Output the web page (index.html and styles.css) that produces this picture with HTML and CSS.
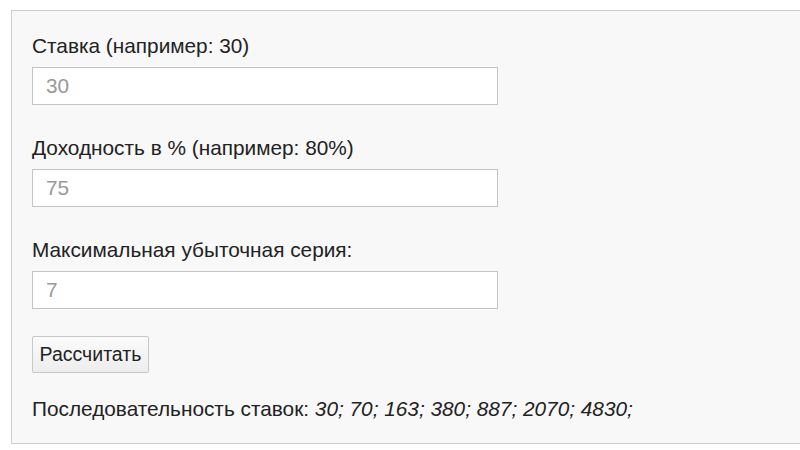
FILE: index.html
```html
<!DOCTYPE html>
<html lang="ru">
<head>
    <meta charset="UTF-8">
    <meta name="viewport" content="width=device-width, initial-scale=1.0">
    <title>Калькулятор ставок</title>
    <link rel="stylesheet" href="styles.css">
</head>
<body>

    <div class="calc">
        <div class="field">
            <label for="bet">Ставка (например: 30)</label>
            <input type="text" id="bet" placeholder="30">
        </div>

        <div class="field">
            <label for="profit">Доходность в % (например: 80%)</label>
            <input type="text" id="profit" placeholder="75">
        </div>

        <div class="field">
            <label for="series">Максимальная убыточная серия:</label>
            <input type="text" id="series" placeholder="7">
        </div>

        <button class="calc-button">Рассчитать</button>

        <p class="result">Последовательность ставок: <em>30; 70; 163; 380; 887; 2070; 4830;</em></p>
    </div>

</body>
</html>
```

FILE: styles.css
```css
body {
    font-family: "Liberation Sans", Arial, sans-serif;
    margin: 0;
    padding: 10px 0 0 11px;
    background-color: #fff;
    color: #222;
}
.calc {
    height: 409px;
    padding: 23px 20px 0 20px;
    background-color: #f8f8f8;
    border: 1px solid #cfcfcf;
    border-right: none;
}
.field {
    margin-bottom: 31px;
}
.field label {
    display: block;
    font-size: 20.8px;
    line-height: 24px;
    margin-bottom: 9px;
}
.field input {
    display: block;
    width: 466px;
    height: 38px;
    box-sizing: border-box;
    padding: 0 13px;
    font-family: inherit;
    font-size: 20.8px;
    color: #222;
    background-color: #fff;
    border: 1px solid #c4c4c4;
    margin: 0;
}
.field input::placeholder {
    color: #999;
}
.calc-button {
    display: block;
    height: 37px;
    width: 117px;
    padding: 0;
    margin-top: -4px;
    font-family: inherit;
    font-size: 19.5px;
    color: #222;
    background: linear-gradient(#fbfbfb, #ededed);
    border: 1px solid #c8c8c8;
    border-radius: 2px;
}
.result {
    font-size: 20.8px;
    line-height: 24px;
    margin: 24px 0 0 0;
}
.result em {
    font-style: italic;
}
```
